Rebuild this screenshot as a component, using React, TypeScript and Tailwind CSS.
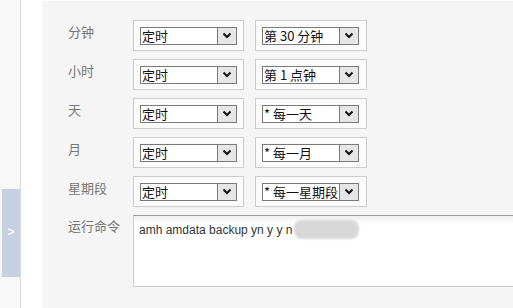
import React from 'react';

interface CronRow {
  label: string;
  mode: string;
  value: string;
}

const rows: CronRow[] = [
  { label: '分钟', mode: '定时', value: '第 30 分钟' },
  { label: '小时', mode: '定时', value: '第 1 点钟' },
  { label: '天', mode: '定时', value: '* 每一天' },
  { label: '月', mode: '定时', value: '* 每一月' },
  { label: '星期段', mode: '定时', value: '* 每一星期段' },
];

const cjk = "font-['SimSun','Noto_Sans_CJK_SC',sans-serif]";

// 模拟老式下拉框
const FakeSelect: React.FC<{ text: string; wide?: boolean }> = ({ text, wide }) => (
  <div
    className={`flex h-[31px] items-center border border-[#cdcdcd] bg-[#fbfbfb] px-[6px] ${
      wide ? 'w-[112px]' : 'w-[111px]'
    }`}
  >
    <div className="flex h-[18px] w-[97px] border border-[#7a7a7a] bg-white">
      <span
        className={`flex flex-1 items-center overflow-hidden whitespace-nowrap pl-[1px] text-[13px] leading-none text-[#111] ${cjk}`}
      >
        {text}
      </span>
      <span className="flex w-[19px] items-center justify-center border-l border-[#7a7a7a] bg-[#e6e6e6]">
        <svg width="10" height="7" viewBox="0 0 10 7">
          <path d="M1.5 1.5 L5 5 L8.5 1.5" stroke="#111" strokeWidth="2" fill="none" />
        </svg>
      </span>
    </div>
  </div>
);

export default function App() {
  return (
    <div className="flex h-[308px] w-[513px] overflow-hidden bg-white">
      {/* 收起的侧栏 */}
      <div className="w-[21px] shrink-0 border-r border-[#dadada] bg-[#f8f8f8] pt-[189px] pl-[2px]">
        <div className="flex h-[88px] items-start justify-center bg-[#c6d0e0] pt-[37px]">
          <span className="font-['Liberation_Sans',sans-serif] text-[12px] font-bold leading-[12px] text-white">&gt;</span>
        </div>
      </div>
      <div className="w-[21px] shrink-0 bg-white" />

      <div className="flex-1 border-t border-[#fdfdfd] bg-[#f5f5f5] pt-[19px] pl-[26px]">
        <div className="flex flex-col gap-[8px]">
          {rows.map((r) => (
            <div key={r.label} className="flex">
              <div className={`w-[65px] pt-[4px] text-[13px] leading-[16px] text-[#777] ${cjk}`}>{r.label}</div>
              <div className="flex gap-[11px]">
                <FakeSelect text={r.mode} />
                <FakeSelect text={r.value} wide />
              </div>
            </div>
          ))}
          <div className="flex">
            <div className={`w-[65px] pt-[3px] text-[13px] leading-[16px] text-[#777] ${cjk}`}>运行命令</div>
            <div className="relative h-[72px] w-[420px] border border-[#cccccc] border-t-[#9a9a9a] bg-gradient-to-b from-[#f0f0f0] to-white to-[12%] px-[5px] pt-[6px]">
              <span className="block font-['Liberation_Sans',sans-serif] text-[12px] leading-[16px] text-[#333]">
                amh amdata backup yn y y n
              </span>
              <span className="absolute left-[160px] top-[4px] h-[19px] w-[65px] rounded-[8px] bg-[#d8d8d8] blur-[1px]" />
            </div>
          </div>
        </div>
      </div>
    </div>
  );
}
